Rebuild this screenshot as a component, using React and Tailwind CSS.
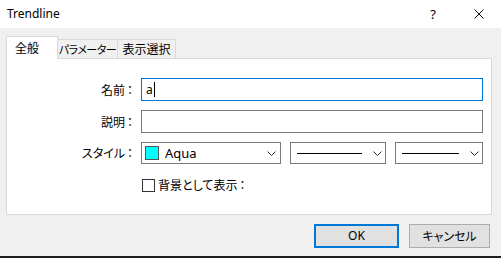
import React from "react";

function Chevron() {
  return (
    <svg width="9" height="5" viewBox="0 0 9 5" className="shrink-0">
      <path d="M0.5 0.5 L4.5 4.5 L8.5 0.5" fill="none" stroke="#333" strokeWidth="1" />
    </svg>
  );
}

const latin = "font-['Noto_Sans',sans-serif]";

function Label({ text }) {
  return (
    <div className="w-[127px] flex justify-end pr-[1px]">
      <span>{text}</span>
      <span className="ml-[2px]">：</span>
    </div>
  );
}

export default function App() {
  return (
    <div className="w-[501px] h-[258px] bg-[#f0f0f0] flex flex-col text-[12px] text-black overflow-hidden font-['Noto_Sans_CJK_JP','Noto_Sans',sans-serif] [font-feature-settings:'palt']">
      {/* Title bar */}
      <div className="h-[28px] bg-white flex items-center shrink-0">
        <span className={`ml-[7px] text-[12px] leading-none ${latin}`}>Trendline</span>
        <span className={`ml-auto mr-[38px] text-[13px] leading-none ${latin}`}>?</span>
        <svg width="10" height="10" viewBox="0 0 10 10" className="mr-[17px]">
          <path d="M0.5 0.5 L9.5 9.5 M9.5 0.5 L0.5 9.5" stroke="#111" strokeWidth="1" />
        </svg>
      </div>

      {/* Tabs */}
      <div className="flex items-end h-[30px] pl-[6px] shrink-0">
        <div className="relative z-10 w-[52px] h-[23px] bg-white border border-b-0 border-[#d9d9d9] flex items-center pl-[8px] mb-[-1px] whitespace-nowrap">
          全般
        </div>
        <div className="w-[60px] h-[19px] border border-b-0 border-l-0 border-[#d9d9d9] flex items-center justify-center whitespace-nowrap text-[11px] tracking-[-0.5px] overflow-hidden">
          パラメーター
        </div>
        <div className="w-[58px] h-[19px] border border-b-0 border-l-0 border-[#d9d9d9] flex items-center justify-center whitespace-nowrap">
          表示選択
        </div>
      </div>

      {/* Panel */}
      <div className="ml-[6px] mr-[9px] h-[157px] bg-white border border-[#d9d9d9] shrink-0 flex flex-col pt-[19px] pr-[8px]">
        <div className="flex items-center h-[23px]">
          <Label text="名前" />
          <div className="ml-[7px] flex-1 h-[23px] border border-[#0078d7] flex items-center pl-[4px]">
            <span className={`leading-none ${latin}`}>a</span>
            <span className="w-[1px] h-[15px] bg-black ml-[1px]" />
          </div>
        </div>
        <div className="flex items-center h-[23px] mt-[9px]">
          <Label text="説明" />
          <div className="ml-[7px] flex-1 h-[23px] border border-[#7a7a7a]" />
        </div>
        <div className="flex items-center h-[22px] mt-[9px]">
          <Label text="スタイル" />
          <div className="ml-[7px] w-[140px] h-[22px] border border-[#7a7a7a] flex items-center pl-[3px] pr-[4px]">
            <span className="w-[14px] h-[14px] bg-[#00ffff] border border-[#555]" />
            <span className={`ml-[6px] text-[13px] leading-none ${latin}`}>Aqua</span>
            <span className="ml-auto"><Chevron /></span>
          </div>
          <div className="ml-[9px] w-[96px] h-[22px] border border-[#7a7a7a] flex items-center pl-[6px] pr-[3px]">
            <span className="w-[65px] h-[1px] bg-black" />
            <span className="ml-auto"><Chevron /></span>
          </div>
          <div className="ml-[9px] w-[88px] h-[22px] border border-[#7a7a7a] flex items-center pl-[6px] pr-[3px]">
            <span className="w-[57px] h-[1px] bg-black" />
            <span className="ml-auto"><Chevron /></span>
          </div>
        </div>
        <div className="flex items-center h-[14px] mt-[14px]">
          <div className="ml-[135px] w-[13px] h-[13px] border border-[#333] bg-white" />
          <span className="ml-[3px] leading-none">背景として表示</span>
          <span className="ml-[2px] leading-none">：</span>
        </div>
      </div>

      {/* Buttons */}
      <div className="flex justify-end mt-[9px] pr-[11px] shrink-0">
        <button className={`w-[85px] h-[24px] bg-[#e1e1e1] border-2 border-[#0078d7] text-[12px] flex items-center justify-center ${latin}`}>
          OK
        </button>
        <button className="ml-[10px] w-[81px] h-[24px] bg-[#e1e1e1] border border-[#adadad] text-[12px] flex items-center justify-center">
          キャンセル
        </button>
      </div>

      <div className="mt-auto h-[2px] bg-[#1f1f1f] shrink-0" />
    </div>
  );
}
